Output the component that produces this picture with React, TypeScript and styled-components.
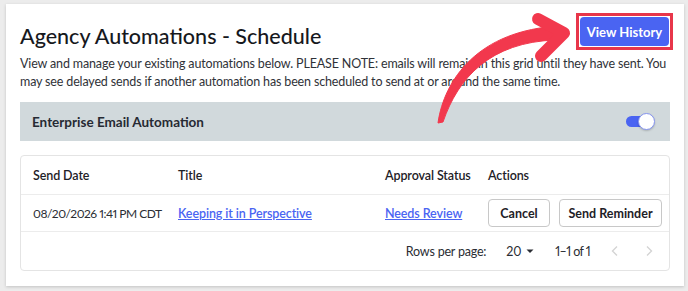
import styled, { createGlobalStyle } from 'styled-components'

const GlobalStyle = createGlobalStyle`
  html, body {
    margin: 0;
    padding: 0;
    background: #ececec;
  }
  body {
    font-family: 'Lato', 'Liberation Sans', sans-serif;
    color: #2a2d33;
    font-variant-numeric: proportional-nums;
  }
  * {
    box-sizing: border-box;
  }
`

type Row = {
  sendDate: string
  title: string
  status: string
}

const rows: Row[] = [
  { sendDate: '08/20/2026 1:41 PM CDT', title: 'Keeping it in Perspective', status: 'Needs Review' },
]

export default function App() {
  return (
    <Page>
      <GlobalStyle />
      <Card>
        <HeaderRow>
          <Title>Agency Automations - Schedule</Title>
          <Highlight>
            <PrimaryButton>View History</PrimaryButton>
          </Highlight>
        </HeaderRow>
        <Description>
          View and manage your existing automations below. PLEASE NOTE: emails will remain in this grid until they have sent. You
          may see delayed sends if another automation has been scheduled to send at or around the same time.
        </Description>

        <SectionBar>
          <SectionTitle>Enterprise Email Automation</SectionTitle>
          <Toggle>
            <Knob />
          </Toggle>
        </SectionBar>

        <TableCard>
          <GridRow $height={39}>
            <HeadCell>Send Date</HeadCell>
            <HeadCell>Title</HeadCell>
            <HeadCell>Approval Status</HeadCell>
            <HeadCell>Actions</HeadCell>
          </GridRow>
          {rows.map((r) => (
            <GridRow key={r.title} $height={37}>
              <Cell>
                <DateText>{r.sendDate}</DateText>
              </Cell>
              <Cell>
                <TextLink href="#">{r.title}</TextLink>
              </Cell>
              <Cell>
                <TextLink href="#">{r.status}</TextLink>
              </Cell>
              <ActionsCell>
                <OutlineButton $width={62}>Cancel</OutlineButton>
                <OutlineButton $width={103}>Send Reminder</OutlineButton>
              </ActionsCell>
            </GridRow>
          ))}
          <Footer>
            <span>Rows per page:</span>
            <PageSize>
              20
              <svg width="10" height="10" viewBox="0 0 10 10">
                <path d="M1.5 3.5 L5 7 L8.5 3.5 Z" fill="#2a2d33" />
              </svg>
            </PageSize>
            <Count>1–1 of 1</Count>
            <PagerNav>
              <svg width="10" height="12" viewBox="0 0 10 12">
                <path d="M7 1.5 L2.5 6 L7 10.5" fill="none" stroke="#d4d4d4" strokeWidth="1.4" />
              </svg>
              <svg width="10" height="12" viewBox="0 0 10 12">
                <path d="M3 1.5 L7.5 6 L3 10.5" fill="none" stroke="#d4d4d4" strokeWidth="1.4" />
              </svg>
            </PagerNav>
          </Footer>
        </TableCard>
      </Card>

      <ArrowOverlay width="688" height="291" viewBox="0 0 688 291">
        <path
          d="M438 123 C 444 80, 478 30, 560 26 L 556 40 C 490 42, 458 78, 443 122 Z"
          fill="#f2384d"
          strokeLinejoin="round"
          stroke="#f2384d"
          strokeWidth="1"
        />
        <polyline
          points="538,19 564,33 541,56"
          fill="none"
          stroke="#f2384d"
          strokeWidth="12"
          strokeLinecap="round"
          strokeLinejoin="round"
        />
      </ArrowOverlay>
    </Page>
  )
}

const Page = styled.div`
  position: relative;
  width: 688px;
  height: 291px;
  padding: 4px 4px 5px 6px;
`

const Card = styled.div`
  background: #fff;
  height: 282px;
  box-shadow: 0 1px 3px rgba(0, 0, 0, 0.18);
  padding: 13px 14px 14px 14px;
`

const HeaderRow = styled.div`
  display: flex;
  justify-content: space-between;
  align-items: flex-start;
`

const Title = styled.h1`
  margin: 5px 0 0 0;
  font-size: 21.5px;
  line-height: 28px;
  font-weight: 500;
  color: #16181d;
`

const Highlight = styled.div`
  border: 3px solid #e8364a;
  padding: 1px;
  margin-top: -4px;
  margin-right: -3px;
`

const PrimaryButton = styled.button`
  display: block;
  width: 89px;
  height: 29px;
  border: none;
  border-radius: 4px;
  background: #4a64f2;
  color: #fff;
  font-family: inherit;
  font-size: 13px;
  font-weight: 700;
  cursor: pointer;
`

const Description = styled.p`
  margin: 5px 0 0 0;
  font-size: 12.5px;
  letter-spacing: -0.15px;
  line-height: 18px;
  color: #2f3238;
`

const SectionBar = styled.div`
  margin-top: 11px;
  height: 39px;
  background: #d1d9dc;
  display: flex;
  align-items: center;
  justify-content: space-between;
  padding: 0 16px 0 12px;
`

const SectionTitle = styled.span`
  font-size: 13.5px;
  font-weight: 700;
  color: #262a33;
`

const Toggle = styled.div`
  position: relative;
  width: 28px;
  height: 11px;
  border-radius: 6px;
  background: #4a64f2;
`

const Knob = styled.div`
  position: absolute;
  right: -1px;
  top: -3px;
  width: 17px;
  height: 17px;
  border-radius: 50%;
  background: #fff;
  border: 1px solid #8594f0;
  box-shadow: 0 1px 2px rgba(0, 0, 0, 0.2);
`

const TableCard = styled.div`
  margin-top: 14px;
  border: 1px solid #e4e4e4;
  border-radius: 4px;
`

const GridRow = styled.div<{ $height: number }>`
  display: grid;
  grid-template-columns: 145px 207px 103px 1fr;
  align-items: center;
  height: ${(p) => p.$height}px;
  border-bottom: 1px solid #ececec;
`

const HeadCell = styled.div`
  padding-left: 12px;
  font-size: 12.5px;
  letter-spacing: -0.1px;
  font-weight: 600;
  color: #1e2127;
  white-space: nowrap;
`

const Cell = styled.div`
  padding-left: 12px;
  font-size: 12.5px;
  color: #2a2d33;
  white-space: nowrap;
`

const DateText = styled.span`
  font-size: 12px;
  letter-spacing: -0.5px;
`

const ActionsCell = styled(Cell)`
  display: flex;
  gap: 9px;
`

const TextLink = styled.a`
  color: #4a64f2;
  font-weight: 600;
  letter-spacing: -0.1px;
  text-decoration: underline;
`

const OutlineButton = styled.button<{ $width: number }>`
  width: ${(p) => p.$width}px;
  height: 28px;
  padding: 0;
  background: #fff;
  border: 1px solid #c8c8c8;
  border-radius: 4px;
  font-family: inherit;
  font-size: 12.5px;
  font-weight: 700;
  color: #1e2127;
  cursor: pointer;
`

const Footer = styled.div`
  height: 38px;
  display: flex;
  align-items: center;
  justify-content: flex-end;
  gap: 20px;
  padding-right: 15px;
  font-size: 12.5px;
  letter-spacing: -0.2px;
  color: #2a2d33;
`

const PageSize = styled.span`
  display: inline-flex;
  align-items: center;
  gap: 4px;
`

const Count = styled.span`
  letter-spacing: -0.6px;
`

const PagerNav = styled.span`
  display: inline-flex;
  gap: 24px;
`

const ArrowOverlay = styled.svg`
  position: absolute;
  left: 0;
  top: 0;
  pointer-events: none;
`
